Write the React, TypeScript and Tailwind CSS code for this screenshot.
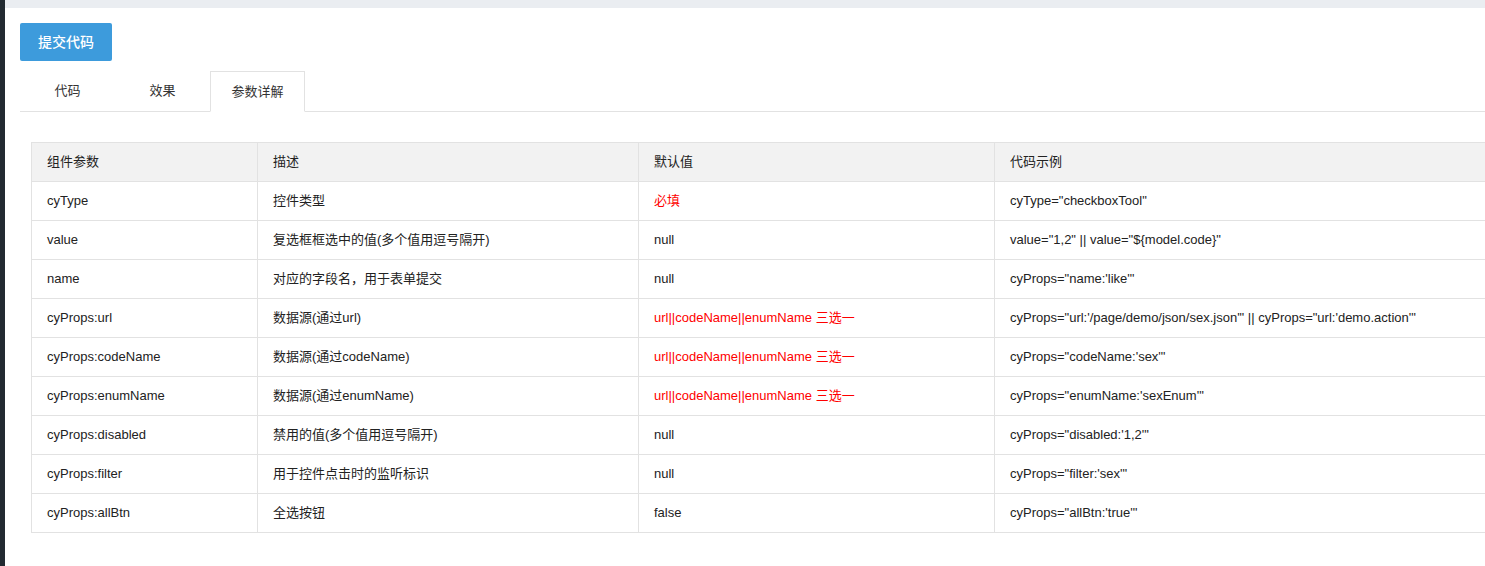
import React from "react";

const rows: [string, string, string, string, boolean][] = [
  ["cyType", "控件类型", "必填", 'cyType="checkboxTool"', true],
  ["value", "复选框框选中的值(多个值用逗号隔开)", "null", 'value="1,2" || value="${model.code}"', false],
  ["name", "对应的字段名，用于表单提交", "null", 'cyProps="name:\'like\'"', false],
  ["cyProps:url", "数据源(通过url)", "url||codeName||enumName 三选一", 'cyProps="url:\'/page/demo/json/sex.json\'" || cyProps="url:\'demo.action\'"', true],
  ["cyProps:codeName", "数据源(通过codeName)", "url||codeName||enumName 三选一", 'cyProps="codeName:\'sex\'"', true],
  ["cyProps:enumName", "数据源(通过enumName)", "url||codeName||enumName 三选一", 'cyProps="enumName:\'sexEnum\'"', true],
  ["cyProps:disabled", "禁用的值(多个值用逗号隔开)", "null", 'cyProps="disabled:\'1,2\'"', false],
  ["cyProps:filter", "用于控件点击时的监听标识", "null", 'cyProps="filter:\'sex\'"', false],
  ["cyProps:allBtn", "全选按钮", "false", 'cyProps="allBtn:\'true\'"', false],
];

export default function App() {
  return (
    <div className="w-[1485px] h-[566px] overflow-hidden flex bg-white text-[13px] text-[#222]" style={{ fontFamily: '"Liberation Sans", Arial, "Noto Sans CJK SC", sans-serif' }}>
      <div className="w-[5px] shrink-0 bg-[#222a31]" />
      <div className="flex-1 flex flex-col min-w-0">
        <div className="h-[8px] bg-[#eaedf1]" />
        <div className="pl-[15px] pt-[15px]">
          <button className="w-[92px] h-[38px] rounded-[2px] bg-[#3d9bdc] text-white text-[14px] font-medium">提交代码</button>
        </div>
        <div className="ml-[15px] mt-[10px] flex h-[41px] border-b border-[#e2e2e2]">
          <div className="w-[95px] flex items-center justify-center text-[#333]">代码</div>
          <div className="w-[95px] flex items-center justify-center text-[#333]">效果</div>
          <div className="w-[95px] flex items-center justify-center text-[#333] border border-[#e2e2e2] border-b-white bg-white -mb-px">参数详解</div>
        </div>
        <div className="ml-[26px] mt-[30px] w-[1500px] shrink-0">
          <table className="border-collapse w-full">
            <colgroup>
              <col className="w-[226px]" />
              <col className="w-[381px]" />
              <col className="w-[356px]" />
              <col />
            </colgroup>
            <thead>
              <tr className="h-[39px] bg-[#f2f2f2]">
                {["组件参数", "描述", "默认值", "代码示例"].map((h) => (
                  <th key={h} className="border border-[#e2e2e2] text-left font-normal px-[15px]">{h}</th>
                ))}
              </tr>
            </thead>
            <tbody>
              {rows.map((r) => (
                <tr key={r[0]} className="h-[39px]">
                  <td className="border border-[#e2e2e2] px-[15px]">{r[0]}</td>
                  <td className="border border-[#e2e2e2] px-[15px]">{r[1]}</td>
                  <td className={`border border-[#e2e2e2] px-[15px] ${r[4] ? "text-[#ff0000]" : ""}`}>{r[2]}</td>
                  <td className="border border-[#e2e2e2] px-[15px] whitespace-nowrap">{r[3]}</td>
                </tr>
              ))}
            </tbody>
          </table>
        </div>
      </div>
    </div>
  );
}
